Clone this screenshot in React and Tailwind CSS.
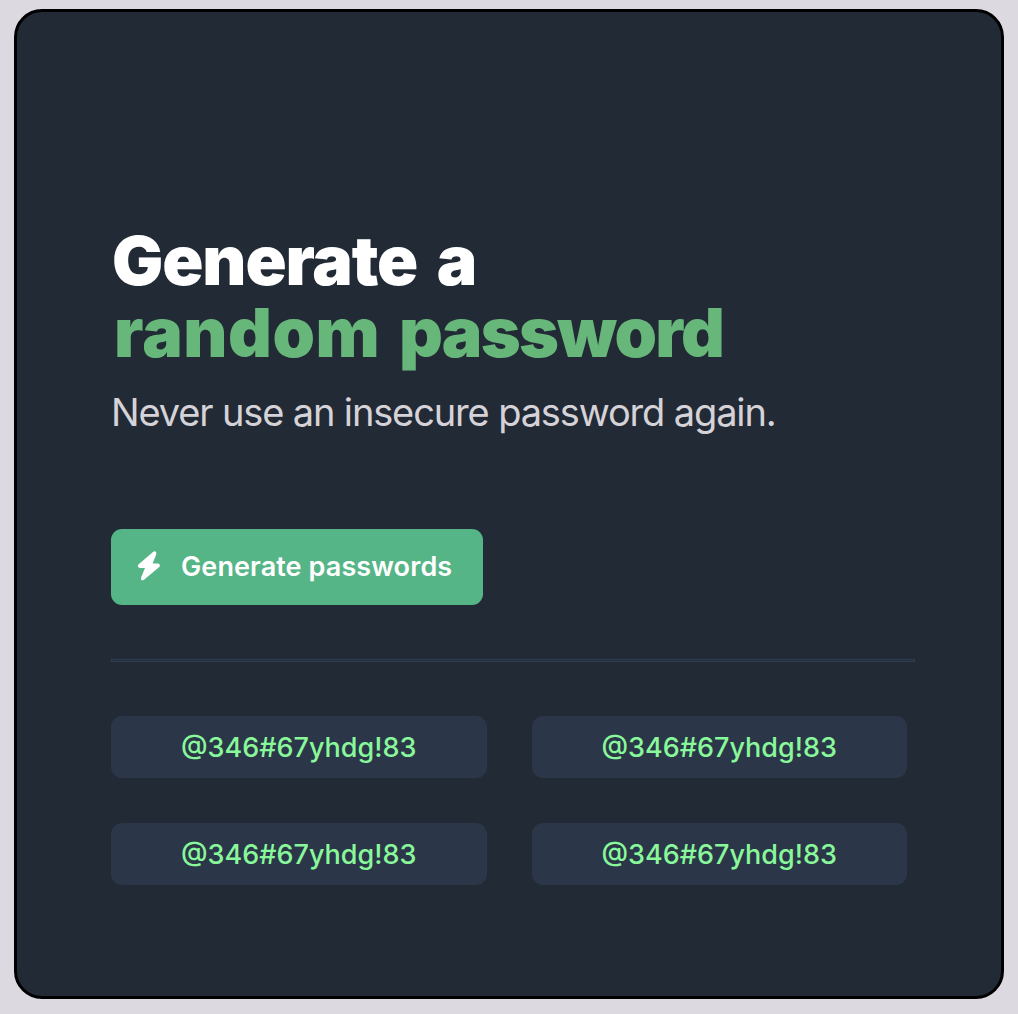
const passwords = ['@346#67yhdg!83', '@346#67yhdg!83', '@346#67yhdg!83', '@346#67yhdg!83'];

function BoltIcon() {
  return (
    <svg className="mb-[3px] h-[30px] w-6 shrink-0" viewBox="0 0 24 30" fill="#fff" aria-hidden="true">
      <path d="M16 1 L1.7 13.3 C.2 14.8 .9 16.9 3 16.9 L8 17 L4.2 26.2 C3.3 28.9 5.1 30.4 7.3 28.5 L22 16.3 C23.7 14.7 22.8 12.7 20.6 12.6 L15.6 12.5 L19.1 3.7 C20.1 1 18.2 -.8 16 1 Z" />
    </svg>
  );
}

export default function App() {
  return (
    <main className="h-[1014px] w-[1018px] overflow-hidden bg-[#dcd9e0] pl-[14px] pt-[9px] font-['Inter',sans-serif]">
      <section className="h-[990px] w-[990px] rounded-[28px] border-[3px] border-black bg-[#222a36] pl-[94px] pt-[212px]">
        <h1 className="whitespace-nowrap text-[68px] font-black leading-[72px] text-white">
          <span className="block pl-px tracking-[-1.1px] [word-spacing:7px]">Generate a</span>
          <span className="block pl-[3px] tracking-[-1.7px] text-[#68b77a] [word-spacing:7px]">
            <span className="tracking-[0.5px]">random</span> password
          </span>
        </h1>
        <p className="mt-[21px] whitespace-nowrap text-[38px] leading-[46px] tracking-[-1.14px] text-[#d5d3d8]">
          Never use an insecure password again.
        </p>
        <button className="mt-[94px] flex h-[76px] w-[372px] items-center whitespace-nowrap rounded-[11px] bg-[#56b587] pl-[26px] text-[27px] font-semibold text-white">
          <BoltIcon />
          <span className="ml-5 tracking-[0.1px]">Generate passwords</span>
        </button>
        <div className="mt-[54px] h-[3px] w-[804px] border border-[#303c51]" />
        <div className="mt-[54px] grid w-[796px] grid-cols-2 gap-[45px]">
          {passwords.map((password, i) => (
            <div
              key={i}
              className="flex h-[62px] items-center justify-center rounded-[11px] bg-[#2b3648] pt-0.5 text-[27px] font-[550] text-[#89f89b]"
            >
              <span>{password}</span>
            </div>
          ))}
        </div>
      </section>
    </main>
  );
}
